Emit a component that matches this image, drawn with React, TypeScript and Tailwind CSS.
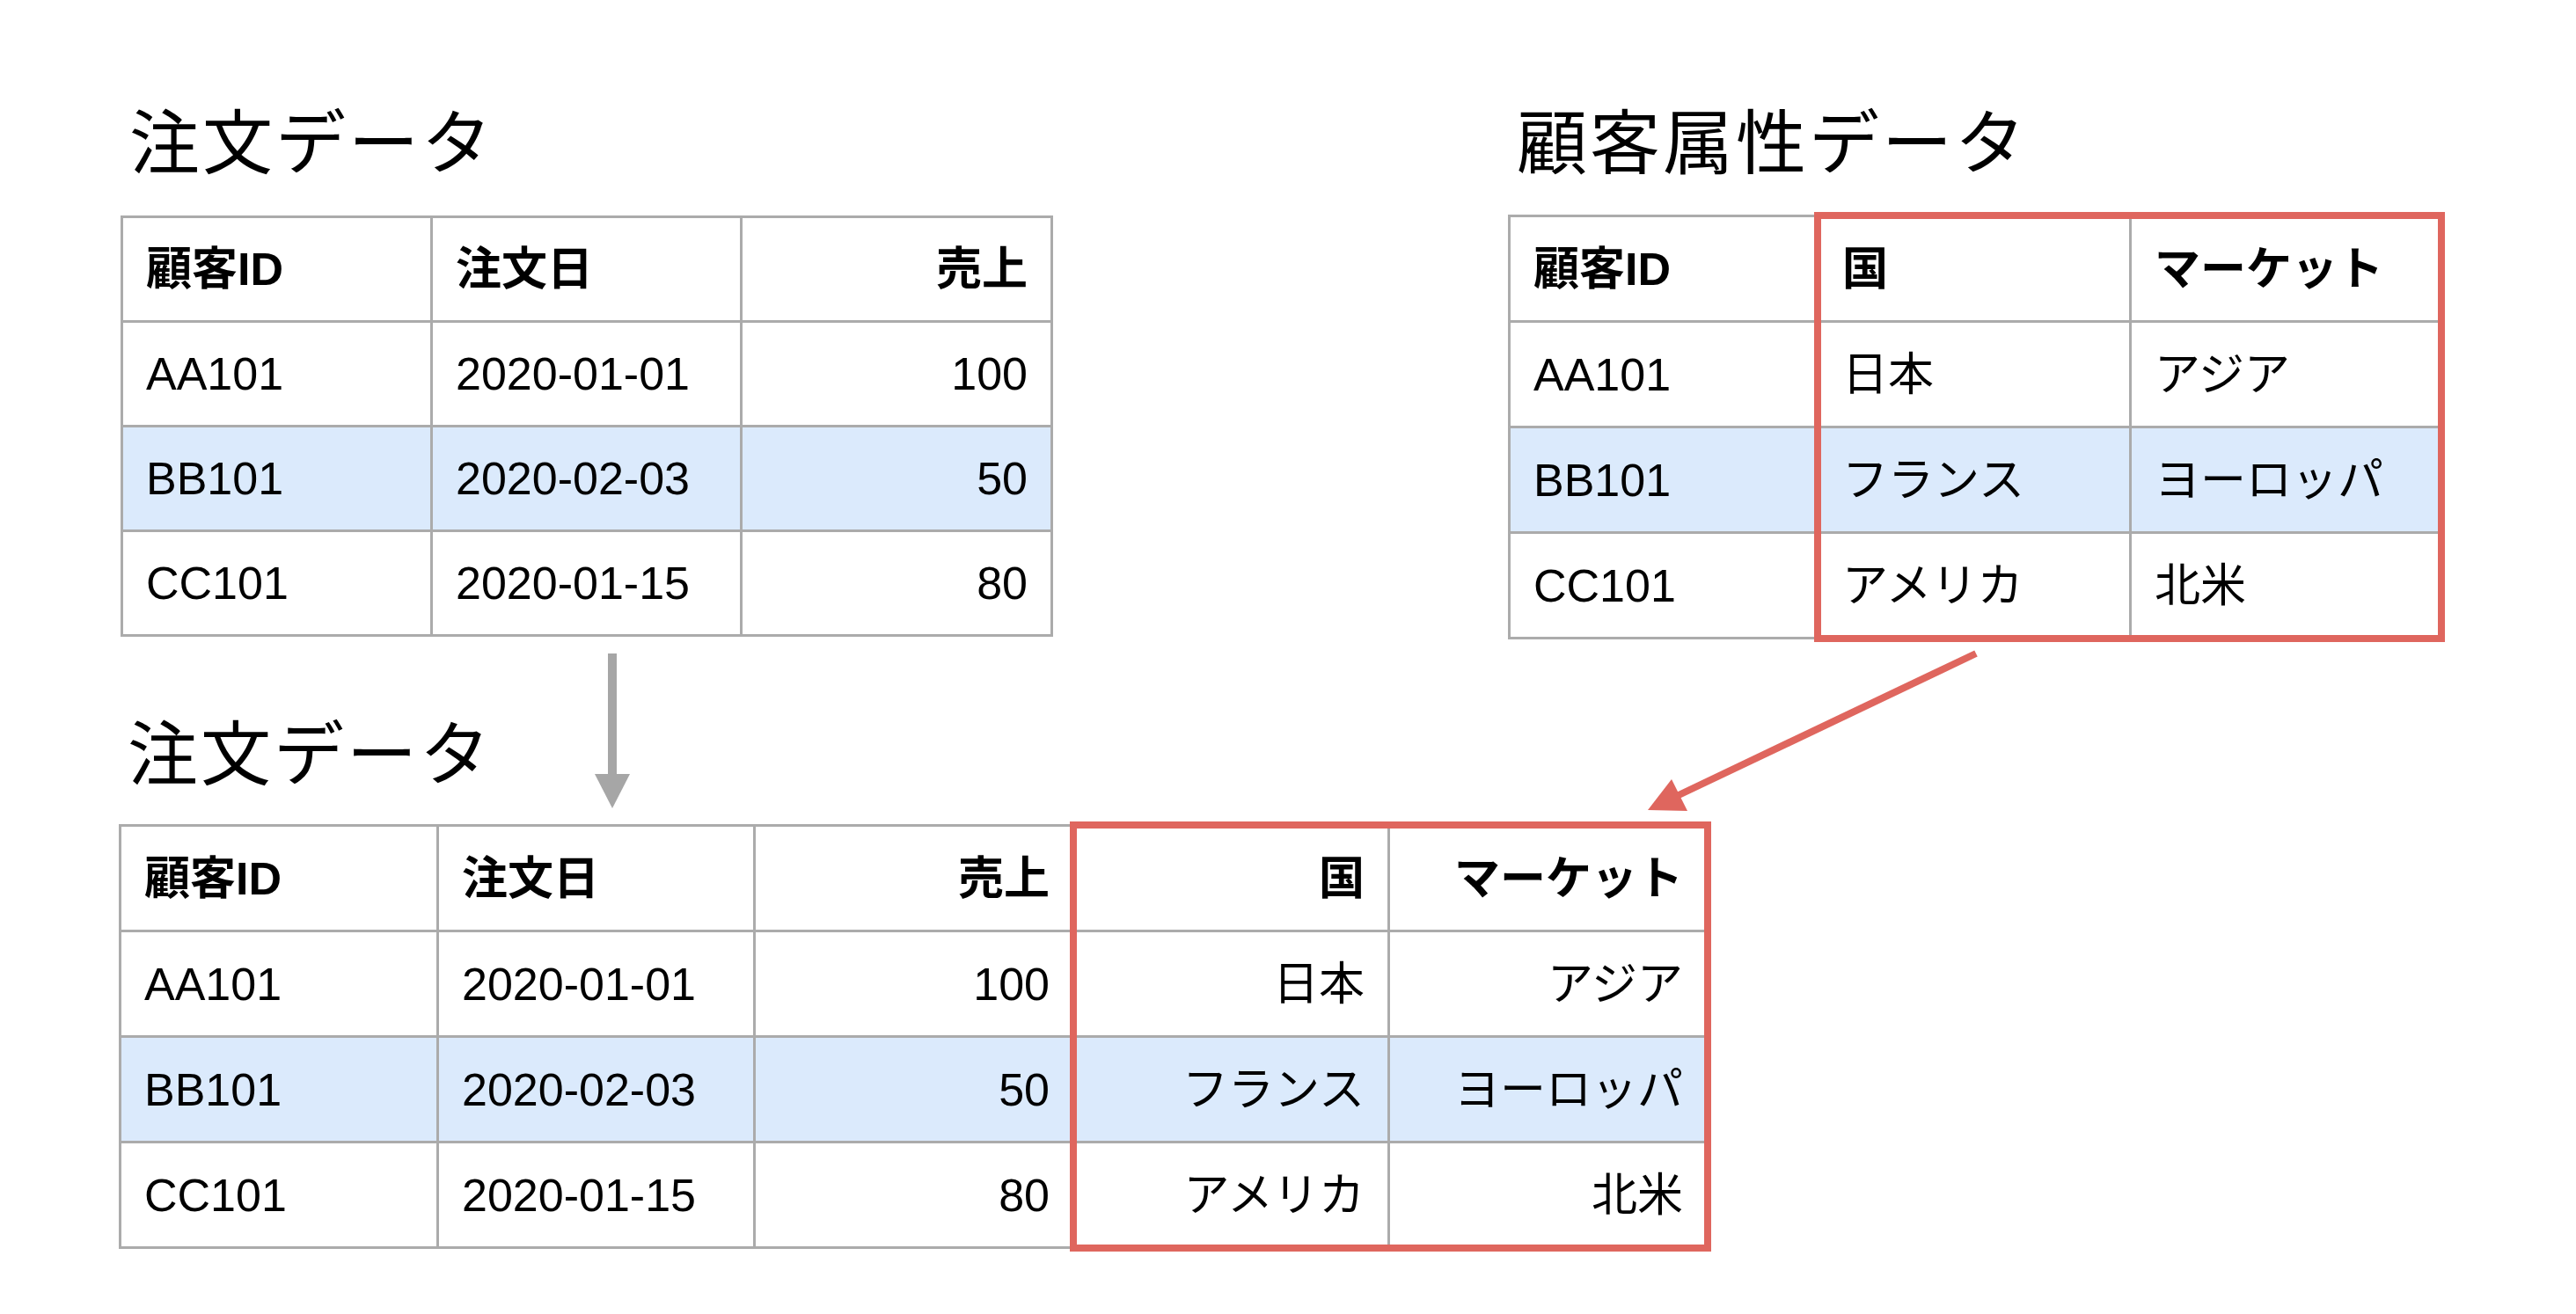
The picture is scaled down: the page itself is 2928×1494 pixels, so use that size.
import React from 'react';

type Align = 'left' | 'right';

type TableProps = {
  widths: number[];
  aligns: Align[];
  header: string[];
  rows: string[][];
  rowH: number;
  redFrom?: number;
};

const FONT = "'Liberation Sans', 'Noto Sans CJK JP', sans-serif";

const DataTable = ({ widths, aligns, header, rows, rowH, redFrom }: TableProps) => {
  const total = widths.reduce((a, b) => a + b, 0);
  const redLeft =
    redFrom !== undefined ? widths.slice(0, redFrom).reduce((a, b) => a + b, 0) - 3 : 0;

  const renderRow = (cells: string[], idx: number, isHeader: boolean) => (
    <div
      key={idx}
      className={`flex ${!isHeader && idx === 1 ? 'bg-[#dbeafc]' : 'bg-white'}`}
      style={{ height: rowH }}
    >
      {cells.map((cell, c) => (
        <div
          key={c}
          className={`flex h-full items-center border-r-[3px] border-b-[3px] border-[#ababab] pl-[26px] pr-[26px] ${
            aligns[c] === 'right' ? 'justify-end' : 'justify-start'
          } ${isHeader ? 'font-bold' : 'font-normal'}`}
          style={{ width: widths[c] }}
        >
          <span className='text-[52px] leading-none text-black'>{cell}</span>
        </div>
      ))}
    </div>
  );

  return (
    <div className='relative' style={{ width: total + 3 }}>
      <div className='flex flex-col border-l-[3px] border-t-[3px] border-[#ababab]'>
        {renderRow(header, -1, true)}
        {rows.map((r, i) => renderRow(r, i, false))}
      </div>
      {/* highlight frame */}
      {redFrom !== undefined && (
        <div
          className='pointer-events-none absolute top-[-3px] bottom-[-3px] right-[-3px] border-[8px] border-[#df665e]'
          style={{ left: redLeft }}
        />
      )}
    </div>
  );
};

const Title = ({ children }: { children: React.ReactNode }) => (
  <div className='h-[80px] pl-[10px] text-[80px] leading-[80px] font-normal tracking-[3px] text-black whitespace-nowrap'>
    {children}
  </div>
);

export default function App() {
  return (
    <div
      className='relative h-[1494px] w-[2928px] overflow-hidden bg-white'
      style={{ fontFamily: FONT }}
    >
      {/* top row */}
      <div className='flex items-start pt-[124px]'>
        <div className='ml-[137px] flex flex-col'>
          <Title>注文データ</Title>
          <div className='mt-[41px]'>
            <DataTable
              widths={[352, 352, 353]}
              aligns={['left', 'left', 'right']}
              header={['顧客ID', '注文日', '売上']}
              rows={[
                ['AA101', '2020-01-01', '100'],
                ['BB101', '2020-02-03', '50'],
                ['CC101', '2020-01-15', '80'],
              ]}
              rowH={119}
            />
          </div>
        </div>

        <div className='ml-[517px] flex flex-col'>
          <Title>顧客属性データ</Title>
          <div className='mt-[40px]'>
            <DataTable
              widths={[351, 355, 353]}
              aligns={['left', 'left', 'left']}
              header={['顧客ID', '国', 'マーケット']}
              rows={[
                ['AA101', '日本', 'アジア'],
                ['BB101', 'フランス', 'ヨーロッパ'],
                ['CC101', 'アメリカ', '北米'],
              ]}
              rowH={120}
              redFrom={1}
            />
          </div>
        </div>
      </div>

      {/* merged result */}
      <div className='ml-[135px] mt-[92px] flex flex-col'>
        <Title>注文データ</Title>
        <div className='mt-[38px]'>
          <DataTable
            widths={[361, 360, 363, 358, 362]}
            aligns={['left', 'left', 'right', 'right', 'right']}
            header={['顧客ID', '注文日', '売上', '国', 'マーケット']}
            rows={[
              ['AA101', '2020-01-01', '100', '日本', 'アジア'],
              ['BB101', '2020-02-03', '50', 'フランス', 'ヨーロッパ'],
              ['CC101', '2020-01-15', '80', 'アメリカ', '北米'],
            ]}
            rowH={120}
            redFrom={3}
          />
        </div>
      </div>

      {/* connector arrows */}
      <svg
        className='pointer-events-none absolute left-0 top-0'
        width={2928}
        height={1494}
        viewBox='0 0 2928 1494'
      >
        <rect x={691} y={743} width={10} height={140} fill='#a6a6a6' />
        <polygon points='676,880 716,880 696,919' fill='#a6a6a6' />
        <line x1={2246} y1={743} x2={1906} y2={905} stroke='#df665e' strokeWidth={8} />
        <polygon points='1873,921 1918,922 1900,886' fill='#df665e' />
      </svg>
    </div>
  );
}
